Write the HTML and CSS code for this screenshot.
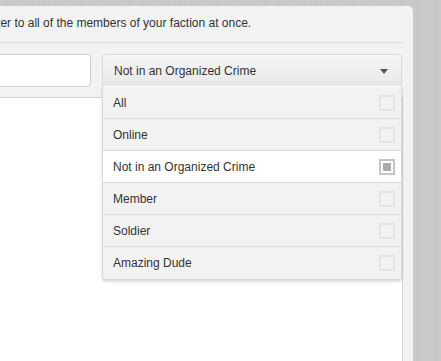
FILE: index.html
```html
<!DOCTYPE html>
<html>

<head>
    <link rel="stylesheet" href="styles.css">
    <title>Faction Newsletter</title>
</head>

<body>
    <div class="panel">
        <p class="intro">Send a newsletter to all of the members of your faction at once.</p>
        <div class="controls">
            <input class="subject" type="text">
            <div class="dropdown">
                <div class="dropdown-head">
                    <span>Not in an Organized Crime</span>
                    <span class="arrow"></span>
                </div>
                <ul class="dropdown-list">
                    <li>All<span class="check"></span></li>
                    <li>Online<span class="check"></span></li>
                    <li class="selected">Not in an Organized Crime<span class="check"></span></li>
                    <li>Member<span class="check"></span></li>
                    <li>Soldier<span class="check"></span></li>
                    <li>Amazing Dude<span class="check"></span></li>
                </ul>
            </div>
        </div>
        <div class="message"></div>
    </div>
</body>

</html>
```

FILE: styles.css
```css
body {
    margin: 0;
    height: 361px;
    overflow: hidden;
    font-family: 'Liberation Sans', Arial, sans-serif;
    font-size: 12px;
    color: #333;
    background-color: #c9c9c9;
    background-image: repeating-linear-gradient(90deg, rgba(255, 255, 255, 0.06) 0 3px, transparent 3px 9px, rgba(0, 0, 0, 0.02) 9px 11px, transparent 11px 17px);
}

.panel {
    margin: 6px 0 0 -20px;
    width: 403px;
    height: 355px;
    padding: 0 10px 0 20px;
    background-color: #f2f2f2;
    border-radius: 0 5px 0 0;
}

.intro {
    margin: 0 0 11px -85px;
    padding-top: 9px;
    line-height: 16px;
    white-space: nowrap;
}

.controls {
    display: flex;
    gap: 11px;
    border-top: 1px solid #dcdcdc;
    padding-top: 11px;
    margin-left: -20px;
}

.subject {
    width: 111px;
    height: 33px;
    box-sizing: border-box;
    border: 1px solid #cfcfcf;
    border-radius: 4px;
    background: #fff;
    margin: 0;
}

.dropdown {
    position: relative;
    width: 300px;
}

.dropdown-head {
    display: flex;
    justify-content: space-between;
    align-items: center;
    height: 32px;
    box-sizing: border-box;
    padding: 0 13px 0 11px;
    border: 1px solid #dadada;
    border-bottom: 0;
    border-radius: 4px 4px 0 0;
    background: linear-gradient(#f6f6f6, #e8e8e8);
}

.arrow {
    width: 0;
    height: 0;
    border-left: 4px solid transparent;
    border-right: 4px solid transparent;
    border-top: 5px solid #555;
    margin-top: 1px;
}

.dropdown-list {
    position: absolute;
    top: 32px;
    left: 0;
    right: 0;
    margin: 0;
    padding: 0 0 1px;
    list-style: none;
    background: #f2f2f2;
    border: 1px solid #dadada;
    border-top: 1px solid #fff;
    border-radius: 0 0 4px 4px;
    box-shadow: 0 2px 3px rgba(0, 0, 0, 0.15);
    z-index: 2;
}

.dropdown-list li {
    display: flex;
    justify-content: space-between;
    align-items: center;
    height: 31px;
    padding: 0 6px 0 10px;
    border-bottom: 1px solid #dcdcdc;
}

.dropdown-list li:last-child {
    border-bottom: 0;
}

.dropdown-list li.selected {
    background: #fff;
}

.check {
    width: 16px;
    height: 16px;
    box-sizing: border-box;
    border: 2px solid #e3e3e3;
}

.selected .check {
    border-color: #c4c4c4;
    padding: 2px;
    background: #aaa content-box;
}

.message {
    margin: 10px 0 0 -20px;
    height: 264px;
    background: #fff;
    border-top: 1px solid #d4d4d4;
    border-right: 1px solid #d4d4d4;
}
```
